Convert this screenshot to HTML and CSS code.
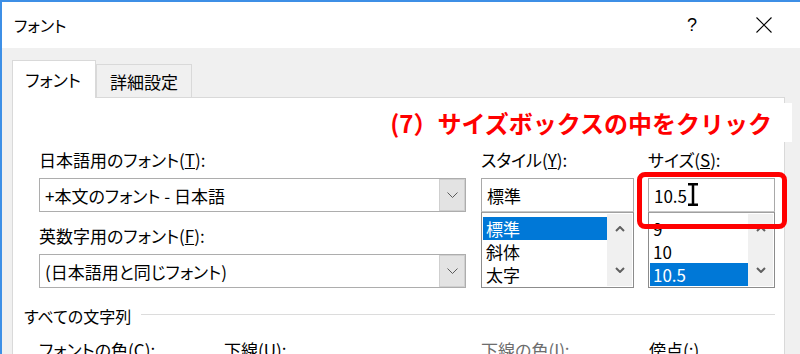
FILE: index.html
```html
<!DOCTYPE html>
<html lang="ja">
<head>
<meta charset="utf-8">
<title>フォント</title>
<link rel="stylesheet" href="styles.css">
</head>
<body>
<div class="window">
  <div class="titlebar">
    <span class="title">フォント</span>
    <span class="help">?</span>
    <span class="close"><svg width="16" height="16" viewBox="0 0 16 16"><path d="M0.5 0.5 L15.5 15.5 M15.5 0.5 L0.5 15.5" stroke="#000" stroke-width="1.1" fill="none"/></svg></span>
  </div>
  <div class="body">
    <div class="tabs">
      <div class="tab active">フォント</div>
      <div class="tab">詳細設定</div>
    </div>
    <div class="panel">
      <div class="formrow">
        <div class="col-font">
          <div class="label">日本語用のフォント(<u>T</u>):</div>
          <div class="combo"><span class="combo-text">+本文のフォント - 日本語</span><span class="combo-btn"><svg width="11" height="6" viewBox="0 0 11 6"><path d="M0.5 0.5 L5.5 5.5 L10.5 0.5" stroke="#5a5a5a" stroke-width="1" fill="none"/></svg></span></div>
          <div class="label second">英数字用のフォント(<u>F</u>):</div>
          <div class="combo"><span class="combo-text">(日本語用と同じフォント)</span><span class="combo-btn"><svg width="11" height="6" viewBox="0 0 11 6"><path d="M0.5 0.5 L5.5 5.5 L10.5 0.5" stroke="#5a5a5a" stroke-width="1" fill="none"/></svg></span></div>
        </div>
        <div class="col-style">
          <div class="label">スタイル(<u>Y</u>):</div>
          <div class="textbox">標準</div>
          <div class="listbox">
            <div class="items">
              <div class="item sel">標準</div>
              <div class="item">斜体</div>
              <div class="item">太字</div>
            </div>
            <div class="scroll">
              <svg width="10" height="6" viewBox="0 0 10 6"><path d="M1 5 L5 1 L9 5" stroke="#606060" stroke-width="2" fill="none"/></svg>
              <svg width="10" height="6" viewBox="0 0 10 6"><path d="M1 1 L5 5 L9 1" stroke="#606060" stroke-width="2" fill="none"/></svg>
            </div>
          </div>
        </div>
        <div class="col-size">
          <div class="label">サイズ(<u>S</u>):</div>
          <div class="textbox size-input">10.5<span class="ibeam"><svg width="10" height="23" viewBox="0 0 10 23"><path d="M0 1.25 H10 M0 21.75 H10 M5 1 V22" stroke="#000" stroke-width="2.5" fill="none"/></svg></span></div>
          <div class="listbox">
            <div class="items">
              <div class="item">9</div>
              <div class="item">10</div>
              <div class="item sel">10.5</div>
            </div>
            <div class="scroll">
              <svg width="10" height="6" viewBox="0 0 10 6"><path d="M1 5 L5 1 L9 5" stroke="#606060" stroke-width="2" fill="none"/></svg>
              <svg width="10" height="6" viewBox="0 0 10 6"><path d="M1 1 L5 5 L9 1" stroke="#606060" stroke-width="2" fill="none"/></svg>
            </div>
          </div>
        </div>
      </div>
      <div class="section"><span>すべての文字列</span><span class="rule"></span></div>
      <div class="bottomrow">
        <span class="b1">フォントの色(<u>C</u>):</span>
        <span class="b2">下線(<u>U</u>):</span>
        <span class="b3 disabled">下線の色(<u>I</u>):</span>
        <span class="b4">傍点(<u>:</u>)</span>
      </div>
    </div>
  </div>
  <div class="note">(7）サイズボックスの中をクリック</div>
  <div class="redbox"></div>
</div>
</body>
</html>
```

FILE: styles.css
```css
* { box-sizing: border-box; }
html, body { margin: 0; padding: 0; }
body {
  width: 800px;
  height: 354px;
  overflow: hidden;
  background: #f0f0f0;
  font-family: "Noto Sans CJK JP", "Noto Sans", sans-serif;
  font-feature-settings: "palt" 1;
  color: #000;
}
.window {
  position: relative;
  width: 800px;
  height: 354px;
  border-top: 2px solid #3d8fe6;
  border-left: 2px solid #3d8fe6;
  background: #f0f0f0;
  overflow: hidden;
}
.titlebar {
  height: 46px;
  background: #fff;
  display: flex;
  align-items: center;
  padding-left: 12px;
  font-size: 16px;
}
.title { flex: 1; }
.help {
  font-family: "Liberation Sans", sans-serif;
  font-size: 18px;
  margin-right: 59px;
}
.close {
  display: flex;
  margin-right: 28px;
}
.body {
  padding: 12px 0 0 10px;
}
.tabs {
  display: flex;
  align-items: flex-end;
  height: 37px;
  font-size: 17px;
}
.tab {
  height: 33px;
  width: 96px;
  border: 1px solid #d9d9d9;
  border-bottom: none;
  display: flex;
  align-items: center;
  justify-content: center;
  background: #f0f0f0;
  padding-top: 1px;
}
.tab.active {
  width: 84px;
  height: 38px;
  background: #fff;
  margin-bottom: -1px;
  position: relative;
  z-index: 1;
  padding-top: 0;
  padding-right: 2px;
}
.panel {
  width: 773px;
  height: 260px;
  background: #fff;
  border: 1px solid #d9d9d9;
  padding-top: 51px;
  font-size: 17px;
}
.formrow {
  display: flex;
  padding-left: 26px;
  gap: 15px;
}
.col-font { width: 427px; }
.col-style { width: 153px; }
.col-size { width: 127px; margin-left: -1px; }
.label {
  height: 22px;
  line-height: 22px;
  margin-bottom: 7px;
  white-space: nowrap;
}
.label.second { margin-top: 13px; margin-bottom: 7px; }
.combo {
  height: 34px;
  border: 1px solid #adadad;
  display: flex;
  align-items: stretch;
  background: #fff;
}
.combo-text {
  flex: 1;
  display: flex;
  align-items: center;
  padding-left: 5px;
}
.combo-btn {
  width: 26px;
  background: #e3e3e3;
  border: 1px solid #cfcfcf;
  display: flex;
  align-items: center;
  justify-content: center;
}
.textbox {
  height: 34px;
  border: 1px solid #a9a9a9;
  border-bottom-color: #c8c8c8;
  display: flex;
  align-items: center;
  padding-left: 5px;
  background: #fff;
}
.size-input { position: relative; }
.ibeam {
  position: absolute;
  left: 39px;
  top: 4px;
  display: flex;
}
.listbox {
  height: 76px;
  border: 1px solid #8c8c8c;
  border-top-color: #a0a0a0;
  display: flex;
  padding: 1px;
  background: #fff;
}
.items {
  flex: 1;
  padding-top: 3px;
  overflow: hidden;
}
.item {
  height: 23px;
  line-height: 23px;
  padding-left: 3px;
}
.item.sel {
  background: #0078d7;
  color: #fff;
}
.scroll {
  width: 25px;
  background: #f0f0f0;
  display: flex;
  flex-direction: column;
  align-items: center;
  justify-content: space-between;
  padding: 12px 0 13px;
}
.section {
  display: flex;
  align-items: center;
  margin-top: 17px;
  padding-left: 11px;
  height: 22px;
  font-size: 16px;
}
.rule {
  flex: 1;
  height: 1px;
  background: #dcdcdc;
  margin-left: 10px;
  margin-right: 9px;
  margin-top: -3px;
}
.bottomrow {
  display: flex;
  margin-top: 12px;
  padding-left: 26px;
  height: 22px;
  line-height: 22px;
  white-space: nowrap;
}
.b1 { width: 185px; }
.b2 { width: 257px; }
.b3 { width: 168px; }
.disabled { color: #6d6d6d; }
.note {
  position: absolute;
  left: 366px;
  top: 101px;
  width: 424px;
  height: 39px;
  background: #fff;
  color: #ff0000;
  font-weight: bold;
  font-size: 24px;
  font-feature-settings: normal;
  line-height: 39px;
  text-align: right;
  padding-right: 20px;
  white-space: nowrap;
}
.redbox {
  position: absolute;
  left: 635px;
  top: 170px;
  width: 150px;
  height: 57px;
  border: 5px solid #ff0000;
  border-radius: 8px;
}
```
